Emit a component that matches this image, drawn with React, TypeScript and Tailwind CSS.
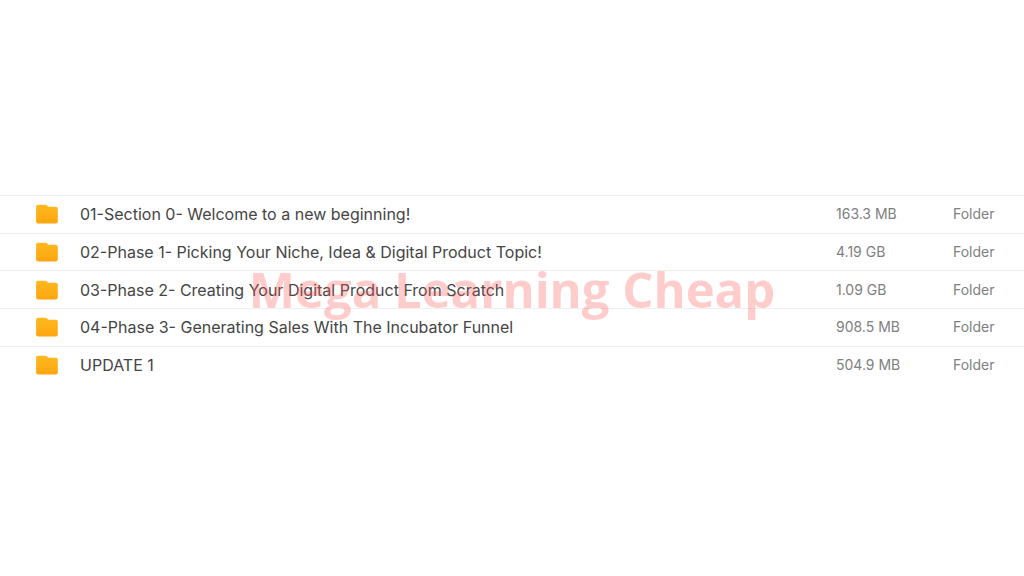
import React from 'react'

const files = [
    { name: '01-Section 0- Welcome to a new beginning!', size: '163.3 MB', type: 'Folder' },
    { name: '02-Phase 1- Picking Your Niche, Idea & Digital Product Topic!', size: '4.19 GB', type: 'Folder' },
    { name: '03-Phase 2- Creating Your Digital Product From Scratch', size: '1.09 GB', type: 'Folder' },
    { name: '04-Phase 3- Generating Sales With The Incubator Funnel', size: '908.5 MB', type: 'Folder' },
    { name: 'UPDATE 1', size: '504.9 MB', type: 'Folder' },
]

const FolderIcon = () => (
    <svg className="block h-5 w-6" viewBox="0 0 24 20" aria-hidden="true">
        <defs>
            <linearGradient id="folder" x1="0" y1="0" x2="0" y2="1">
                <stop offset="0" stopColor="#ffb920" />
                <stop offset="1" stopColor="#fda50f" />
            </linearGradient>
        </defs>
        <path d="M3 .8h7.500c.6 0 1.100.2 1.500.6l1 1c.3.300.6.4 1 .4H20.900c1.100 0 1.900.8 1.900 1.900V17.600c0 1.100-.8 1.900-1.900 1.900H3c-1.100 0-1.900-.8-1.900-1.900V2.700C1.100 1.600 1.900.8 3 .8z" fill="url(#folder)" />
    </svg>
)

const App = () => {
    return (
        <main className="relative flex min-h-screen items-center bg-white pt-0.5 font-['Inter',sans-serif]">
            <table className="h-[188px] w-full table-fixed border-collapse text-left">
                <tbody>
                    {files.map((file) => (
                        <tr key={file.name} className="border-t border-[#efefef]">
                            <td className="w-20 pl-[35px]">
                                <FolderIcon />
                            </td>
                            <td className="text-base text-[#454545]">{file.name}</td>
                            <td className="w-[117px] text-sm text-[#808080]">{file.size}</td>
                            <td className="w-[71px] text-sm text-[#808080]">{file.type}</td>
                        </tr>
                    ))}
                </tbody>
            </table>
            <p className="pointer-events-none absolute inset-0 flex items-center justify-center pt-1 font-['Open_Sans',sans-serif] text-[49px] font-bold text-[#ff5757]/30">
                Mega Learning Cheap
            </p>
        </main>
    )
}

export default App
